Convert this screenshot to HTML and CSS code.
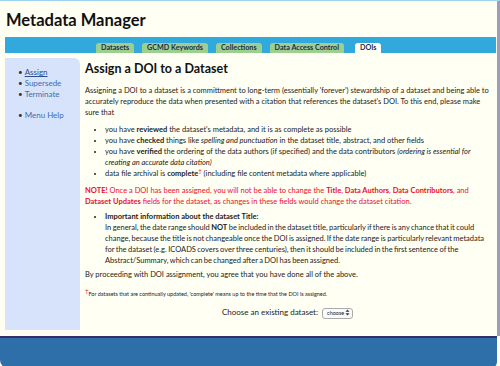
FILE: index.html
```html
<!DOCTYPE html>
<html lang="en">
<head>
  <meta charset="UTF-8">
  <title>Metadata Manager - DOIs</title>
  <link rel="stylesheet" href="styles.css">
</head>
<body>
  <div class="page">
    <h1 class="title">Metadata Manager</h1>
    <div class="navbar">
      <a class="tab" href="#">Datasets</a>
      <a class="tab" href="#">GCMD Keywords</a>
      <a class="tab" href="#">Collections</a>
      <a class="tab" href="#">Data Access Control</a>
      <a class="tab active" href="#">DOIs</a>
    </div>
    <div class="body-wrap">
      <div class="sidebar">
        <ul class="side-menu">
          <li><a class="current" href="#">Assign</a></li>
          <li><a href="#">Supersede</a></li>
          <li><a href="#">Terminate</a></li>
        </ul>
        <ul class="side-menu">
          <li><a href="#">Menu Help</a></li>
        </ul>
      </div>
      <div class="main">
        <h2>Assign a DOI to a Dataset</h2>
        <p>Assigning a DOI to a dataset is a committment to long-term (essentially 'forever') stewardship of a dataset and being able to accurately reproduce the data when presented with a citation that references the dataset's DOI. To this end, please make sure that</p>
        <ul class="checks">
          <li>you have <b>reviewed</b> the dataset's metadata, and it is as complete as possible</li>
          <li>you have <b>checked</b> things like <i>spelling and punctuation</i> in the dataset title, abstract, and other fields</li>
          <li>you have <b>verified</b> the ordering of the data authors (if specified) and the data contributors <i>(ordering is essential for</i> <i>creating an accurate data citation)</i></li>
          <li>data file archival is <b>complete</b><sup class="dagger">&dagger;</sup> (including file content metadata where applicable)</li>
        </ul>
        <p class="note"><b>NOTE!</b> Once a DOI has been assigned, you will not be able to change the <b>Title</b>, <b>Data Authors</b>, <b>Data Contributors</b>, and <b>Dataset</b> <b>Updates</b> fields for the dataset, as changes in these fields would change the dataset citation.</p>
        <ul class="checks important">
          <li>
            <div class="imp-title">Important information about the dataset Title:</div>
            <div class="imp-text">In general, the date range should <b>NOT</b> <span>be included in the dataset title, particularly if there is any chance that it could</span> change, because the title is not changeable once the DOI is assigned. If the date range is particularly relevant metadata for the dataset (e.g. ICOADS covers over three centuries), then it should be included in the first sentence of the Abstract/Summary, which can be changed after a DOI has been assigned.</div>
          </li>
        </ul>
        <p class="agree">By proceeding with DOI assignment, you agree that you have done all of the above.</p>
        <p class="footnote"><sup class="dagger">&dagger;</sup>For datasets that are continually updated, 'complete' means up to the time that the DOI is assigned.</p>
        <div class="chooser">
          <label for="ds">Choose an existing dataset:</label>
          <span class="select-wrap">
            <select id="ds"><option>choose</option></select>
            <svg class="arrows" width="5" height="7" viewBox="0 0 5 7"><path d="M2.5 0.5 L4.5 2.8 L0.5 2.8 Z M2.5 6.5 L4.5 4.2 L0.5 4.2 Z" fill="#333"/></svg>
          </span>
        </div>
      </div>
    </div>
  </div>
  <div class="footer"></div>
</body>
</html>
```

FILE: styles.css
```css
html, body {
  margin: 0;
  padding: 0;
}
body {
  background: #fffff4;
  font-family: Lato, "Open Sans", sans-serif;
  color: #222;
  height: 366px;
  overflow: hidden;
  border-top: 1px solid #9fd6ee;
  box-sizing: border-box;
}
.page {
  border-right: 3px solid #9c9cbe;
  height: 335px;
  box-sizing: border-box;
}
.title {
  margin: 0;
  padding: 10px 0 0 6px;
  height: 26px;
  font-size: 16.5px;
  line-height: 18px;
  font-weight: 700;
  color: #111;
}
.navbar {
  margin: 0 1px 0 5px;
  height: 16px;
  background: #31a9dc;
  display: flex;
  align-items: flex-end;
  gap: 8px;
  padding-left: 91px;
}
.tab {
  background: #9dd08e;
  color: #1d2b4e;
  font-size: 7.2px;
  font-weight: 700;
  text-decoration: none;
  line-height: 10px;
  height: 10px;
  padding: 0 5px;
  border-radius: 3px 3px 0 0;
}
.tab.active {
  background: #fffff4;
  margin-left: 3px;
}
.body-wrap {
  display: flex;
  padding: 5px 0 0 5px;
}
.sidebar {
  width: 75px;
  flex: none;
  height: 272px;
  background: #d6e3fb;
  border-top-right-radius: 6px;
  padding-top: 9px;
  box-sizing: border-box;
}
.side-menu {
  margin: 0 0 10px 0;
  padding: 0 0 0 13px;
  list-style: none;
  font-size: 8px;
  line-height: 11px;
}
.side-menu li::before {
  content: "\2022";
  color: #333;
  margin-right: 2px;
}
.side-menu a {
  color: #3d6fae;
  text-decoration: none;
}
.side-menu a.current {
  color: #2b4f8e;
  text-decoration: underline;
}
.main {
  flex: 1;
  padding: 0 7px 0 5px;
  font-size: 7.5px;
  line-height: 11px;
}
h2 {
  margin: 3px 0 8px;
  font-size: 12.5px;
  line-height: 16px;
  font-weight: 700;
  color: #111;
}
p {
  margin: 0 0 6px;
}
.checks {
  margin: 0 0 6px;
  padding-left: 20px;
}
.checks.important {
  margin-bottom: 3px;
}
.imp-title {
  font-weight: 700;
}
.imp-text {
  word-spacing: -0.5px;
}
.dagger {
  color: #e8102a;
  font-size: 6px;
  line-height: 0;
}
.note {
  color: #e8102a;
  margin-bottom: 4px;
}
.agree {
  margin: 3px 0 9px;
}
.footnote {
  font-size: 5.5px;
  margin-bottom: 7px;
}
.chooser {
  text-align: center;
  font-size: 8px;
}
.select-wrap {
  position: relative;
  display: inline-block;
  vertical-align: middle;
  margin-left: 2px;
}
.select-wrap select {
  appearance: none;
  -webkit-appearance: none;
  font-family: Lato, sans-serif;
  font-size: 5.5px;
  height: 11px;
  width: 31px;
  padding: 0 0 0 4px;
  border: 1px solid #aaa;
  border-radius: 3px;
  background: #fafafa;
  color: #222;
}
.select-wrap .arrows {
  position: absolute;
  right: 3px;
  top: 2px;
  pointer-events: none;
}
.footer {
  border-top: 2px solid #33306a;
  background: #2e6ea9;
  height: 30px;
  border-bottom-left-radius: 8px;
  border-bottom-right-radius: 6px;
  margin-right: 3px;
}
```
